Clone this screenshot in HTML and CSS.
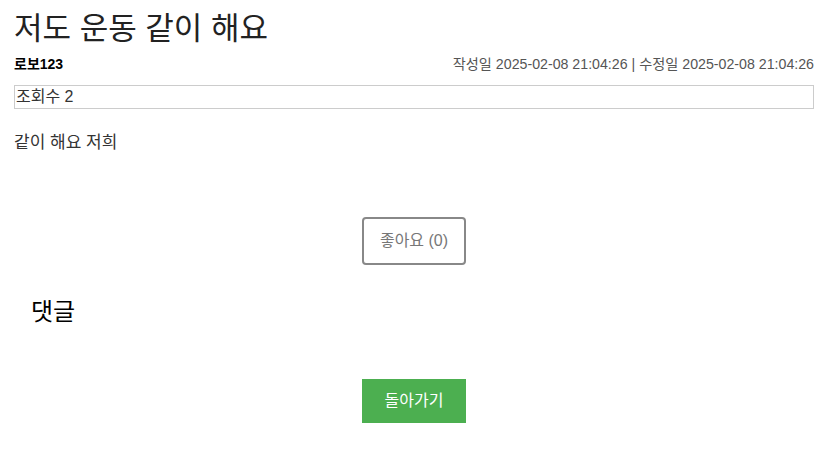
FILE: index.html
```html
<!DOCTYPE html>
<html lang="ko">
<head>
<meta charset="utf-8">
<title>저도 운동 같이 해요</title>
<link rel="stylesheet" href="styles.css">
</head>
<body>
<div class="post">
  <h1 class="post-title">저도 운동 같이 해요</h1>
  <div class="post-meta">
    <span class="author">로보123</span>
    <span class="dates">작성일 2025-02-08 21:04:26 | 수정일 2025-02-08 21:04:26</span>
  </div>
  <div class="views">조회수 2</div>
  <div class="post-body">같이 해요 저희</div>
  <div class="like-row">
    <button class="like-btn" type="button">좋아요 (0)</button>
  </div>
  <section class="comments">
    <h2 class="comments-title">댓글</h2>
  </section>
  <div class="back-row">
    <button class="back-btn" type="button">돌아가기</button>
  </div>
</div>
</body>
</html>
```

FILE: styles.css
```css
html, body {
  margin: 0;
  padding: 0;
  background: #fff;
}
body {
  font-family: "Liberation Sans", "Noto Sans CJK KR", sans-serif;
  color: #333;
}
.post {
  width: 800px;
  margin: 0 auto;
}
.post-title {
  margin: 11px 0 0;
  font-size: 31px;
  line-height: 35px;
  font-weight: normal;
  color: #222;
}
.post-meta {
  margin-top: 8px;
  display: flex;
  justify-content: space-between;
  font-size: 14px;
  line-height: 20px;
}
.author {
  font-weight: bold;
  color: #000;
}
.dates {
  color: #555;
  font-size: 14.2px;
}
.views {
  margin-top: 11px;
  border: 1px solid #ccc;
  font-size: 16px;
  line-height: 22px;
  padding: 0 1px;
}
.post-body {
  margin-top: 23px;
  font-size: 17px;
  line-height: 22px;
}
.like-row {
  margin-top: 63px;
  display: flex;
  justify-content: center;
}
.like-btn {
  font-family: inherit;
  font-size: 16px;
  line-height: 20px;
  padding: 12px 14px;
  border: 2px solid #888;
  border-radius: 4px;
  background: #fff;
  color: #777;
  width: 104px;
}
.comments {
  margin-top: 32px;
  padding-left: 17px;
}
.comments-title {
  margin: 0;
  font-size: 24px;
  line-height: 30px;
  font-weight: normal;
  color: #000;
}
.back-row {
  margin-top: 52px;
  display: flex;
  justify-content: center;
}
.back-btn {
  font-family: inherit;
  font-size: 16px;
  line-height: 20px;
  padding: 12px 0;
  width: 104px;
  border: none;
  border-radius: 0;
  background: #4caf50;
  color: #fff;
}
```
